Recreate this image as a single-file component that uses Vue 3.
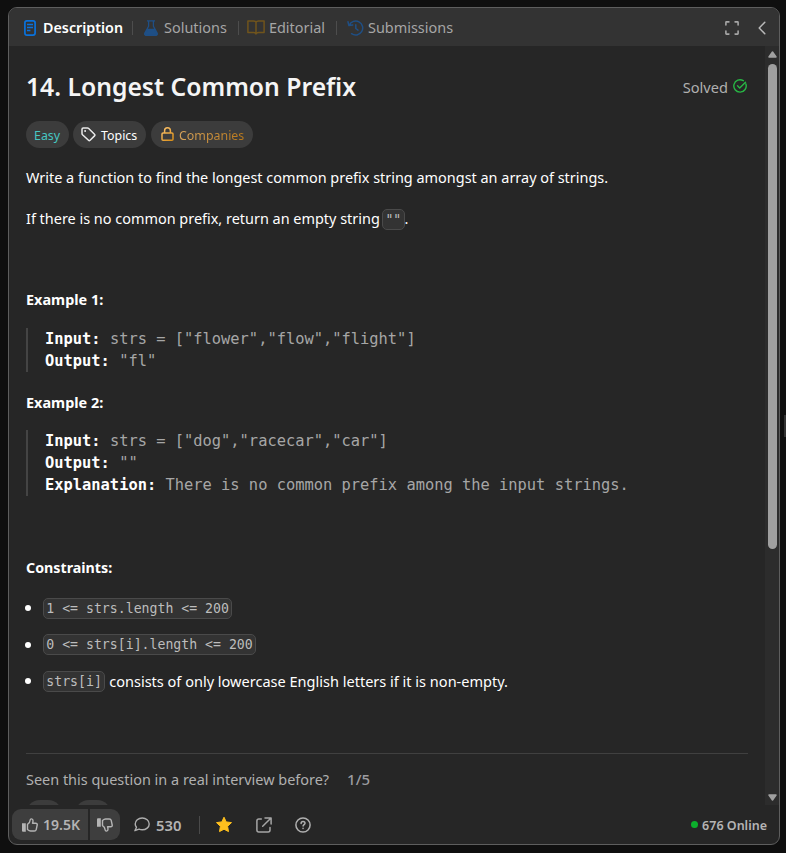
<script setup>
const examples = [
  {
    title: 'Example 1:',
    lines: [
      ['Input:', 'strs = ["flower","flow","flight"]'],
      ['Output:', '"fl"'],
    ],
  },
  {
    title: 'Example 2:',
    lines: [
      ['Input:', 'strs = ["dog","racecar","car"]'],
      ['Output:', '""'],
      ['Explanation:', 'There is no common prefix among the input strings.'],
    ],
  },
]
const constraints = [
  { code: '1 <= strs.length <= 200', text: '' },
  { code: '0 <= strs[i].length <= 200', text: '' },
  { code: 'strs[i]', text: 'consists of only lowercase English letters if it is non-empty.' },
]
</script>

<template>
  <div class="page">
    <section class="panel">
      <header class="tabs">
        <div class="tab active">
          <svg class="doc" width="12" height="16" viewBox="0 0 12 16" fill="none" stroke="#0a72dc" stroke-width="1.7">
            <rect x="0.9" y="0.9" width="10.2" height="14.2" rx="2" />
            <path d="M3 4.5h6M3 7.5h6M3 10.5h3.4" stroke-width="1.3" />
          </svg>
          <span>Description</span>
        </div>
        <i class="sep s1"></i>
        <div class="tab">
          <svg class="flask" width="14" height="16" viewBox="0 0 14 16" fill="none" stroke="#1f4f85" stroke-width="1.3" stroke-linejoin="round">
            <path d="M3 .8h8M4.600 .8v5.400L1 12.900c-.7 1.400 0 2.400 1.300 2.400h9.400c1.300 0 2-1 1.300-2.400L9.400 6.200V.8" />
            <path d="M3.400 9.400h7.200l2.200 4c.4 1-.1 1.600-1 1.600H2.200c-.9 0-1.400-.6-1-1.600z" fill="#1f4f85" />
          </svg>
          <span>Solutions</span>
        </div>
        <i class="sep s2"></i>
        <div class="tab">
          <svg class="book" width="18" height="15" viewBox="0 0 18 15" fill="none" stroke="#70541c" stroke-width="1.5" stroke-linejoin="round">
            <path d="M9 2.300C8.600 1.300 7.700.9 6.500.9H.9v11.500h5.600c1.300 0 2.100.5 2.500 1.500.4-1 1.200-1.500 2.500-1.500h5.600V.9h-5.600C10.300.9 9.400 1.300 9 2.300zM9 2.300v11.600" />
          </svg>
          <span>Editorial</span>
        </div>
        <i class="sep s3"></i>
        <div class="tab">
          <svg class="history" width="17" height="16" viewBox="0 0 17 16" fill="none" stroke="#1f4f85" stroke-width="1.500" stroke-linecap="round" stroke-linejoin="round">
            <path d="M2.300 5.200A7 7 0 1 1 4.600 13.700M1 1.800l.9 3.700 3.800-.6M8.800 4.800v3.700l2.200 1.600" />
          </svg>
          <span>Submissions</span>
        </div>
        <svg class="expand" width="14" height="14" viewBox="0 0 14 14" fill="none" stroke="#a6a6a6" stroke-width="1.600" stroke-linecap="round" stroke-linejoin="round">
          <path d="M.9 3.900V1.400a.5.5 0 0 1 .5-.5h2.500M10.100.9h2.500a.5.5 0 0 1 .5.5v2.500M13.100 10.100v2.500a.5.5 0 0 1-.5.500h-2.500M3.900 13.100H1.400a.5.5 0 0 1-.5-.5v-2.500" />
        </svg>
        <svg class="chevron" width="8" height="14" viewBox="0 0 8 14" fill="none" stroke="#b8b8b8" stroke-width="1.500" stroke-linecap="round" stroke-linejoin="round">
          <path d="M6.800 1.200 1.200 7l5.600 5.800" />
        </svg>
      </header>

      <div class="body">
        <main class="content">
          <div class="title-row">
            <h1>14. Longest Common Prefix</h1>
            <div class="solved">
              <span>Solved</span>
              <svg width="14" height="14" viewBox="0 0 14 14" fill="none" stroke="#28b645" stroke-width="1.400" stroke-linecap="round" stroke-linejoin="round">
                <path d="M12.900 5A6.200 6.200 0 1 1 10.300 1.700M4.500 6.700l2.200 2.200 5.800-5.700" />
              </svg>
            </div>
          </div>

          <div class="tags">
            <span class="tag easy">Easy</span>
            <span class="tag topics">
              <svg width="15" height="15" viewBox="0 0 15 15" fill="none" stroke="#e8e8e8" stroke-width="1.500" stroke-linejoin="round">
                <path d="M1 2.200Q1 1 2.200 1h4.300q.7 0 1.200.5l5.800 5.800q.8.8 0 1.600l-4.400 4.400q-.8.8-1.600 0L1.500 7.700Q1 7.200 1 6.500z" />
                <circle cx="4.100" cy="4.100" r="1" fill="#e8e8e8" stroke="none" />
              </svg>
              Topics
            </span>
            <span class="tag companies">
              <svg width="13" height="14" viewBox="0 0 13 14" fill="none" stroke="url(#gold)" stroke-width="1.500">
                <defs>
                  <linearGradient id="gold" gradientUnits="userSpaceOnUse" x1="0" y1="0" x2="13" y2="14">
                    <stop offset="0" stop-color="#ffc876" />
                    <stop offset="1" stop-color="#d58a12" />
                  </linearGradient>
                </defs>
                <rect x="1" y="6" width="11" height="7.200" rx="1" />
                <path d="M3.600 6V3.700a2.900 2.900 0 0 1 5.800 0V6" />
              </svg>
              <span class="gold">Companies</span>
            </span>
          </div>

          <article class="prose">
            <p>Write a function to find the longest common prefix string amongst an array of strings.</p>
            <p>If there is no common prefix, return an empty string <code>""</code>.</p>
            <p>&nbsp;</p>
            <template v-for="ex in examples" :key="ex.title">
              <p><strong>{{ ex.title }}</strong></p>
              <div class="sample">
                <div v-for="[label, value] in ex.lines" :key="label"><b>{{ label }}</b> {{ value }}</div>
              </div>
            </template>
            <p class="constraints"><strong>Constraints:</strong></p>
            <ul>
              <li v-for="c in constraints" :key="c.code"><code>{{ c.code }}</code> {{ c.text }}</li>
            </ul>
          </article>

          <div class="interview">
            <span>Seen this question in a real interview before?</span>
            <span class="count">1/5</span>
          </div>
          <div class="answers"><i></i><i></i></div>
        </main>
        <aside class="scrollbar">
          <svg width="9" height="7" viewBox="0 0 9 7"><path d="M4.500 1 8 6H1z" fill="#a0a0a0" stroke="#a0a0a0" stroke-width="1.500" stroke-linejoin="round" /></svg>
          <div class="thumb"></div>
          <svg class="down" width="9" height="7" viewBox="0 0 9 7"><path d="M4.500 6 8 1H1z" fill="#a0a0a0" stroke="#a0a0a0" stroke-width="1.500" stroke-linejoin="round" /></svg>
        </aside>
      </div>

      <footer class="footer">
        <button class="vote up">
          <svg width="16" height="14" viewBox="0 0 16 14" fill="none" stroke="#b4b4b4" stroke-width="1.400" stroke-linejoin="round">
            <path d="M0 5.200h3.800v8.600H1q-1 0-1-1z" fill="#b4b4b4" stroke="none" />
            <path d="M5.500 6.400C7.300 5.400 8 4 8.100 2.200 8.200.4 11 .2 11 2.700c0 1-.2 1.800-.5 2.500h3.100c1.200 0 1.800.8 1.600 1.800l-1 4.600c-.2.900-.9 1.400-1.900 1.400H8.600c-1.200 0-2-.5-3.100-1.500z" />
          </svg>
          <span>19.5K</span>
        </button>
        <button class="vote dn">
          <svg width="16" height="14" viewBox="0 0 16 14" fill="none" stroke="#b4b4b4" stroke-width="1.400" stroke-linejoin="round">
            <path d="M0 8.800h3.800V.2H1q-1 0-1 1z" fill="#b4b4b4" stroke="none" />
            <path d="M5.500 7.600C7.300 8.600 8 10 8.100 11.800c.1 1.800 2.900 2 2.900-.5 0-1-.2-1.800-.5-2.500h3.100c1.200 0 1.800-.8 1.600-1.800l-1-4.600C14 1.500 13.300 1 12.300 1H8.600c-1.200 0-2 .5-3.100 1.500z" />
          </svg>
        </button>
        <svg class="bubble" width="16" height="15" viewBox="0 0 16 15" fill="none" stroke="#adadad" stroke-width="1.400" stroke-linejoin="round">
          <path d="M8.200 1c3.900 0 7 2.500 7 5.900s-3.100 5.900-7 5.900c-1.100 0-2.200-.2-3.100-.6L.9 13.700l1.600-3.400C1.700 9.300 1.200 8.200 1.200 6.900 1.200 3.500 4.300 1 8.200 1z" />
        </svg>
        <span class="comments">530</span>
        <i class="bar"></i>
        <svg class="star" width="18" height="17" viewBox="0 0 18 17">
          <path d="M9 1.200l2.200 4.700 5.300.7-3.900 3.700.9 5.300L9 13.200l-4.500 2.400.9-5.300-3.900-3.700 5.300-.7z" fill="#ffc01e" stroke="#ffc01e" stroke-width="1" stroke-linejoin="round" />
        </svg>
        <svg class="share" width="16" height="16" viewBox="0 0 16 16" fill="none" stroke="#a5a5a5" stroke-width="1.500" stroke-linecap="round" stroke-linejoin="round">
          <path d="M5.300 2H2.800Q.9 2 .9 3.900v9.200q0 2 1.900 2h9.300q1.900 0 1.900-2v-2.600M9 .9h6.100V7M15 1 6.700 9.300" />
        </svg>
        <svg class="help" width="16" height="16" viewBox="0 0 16 16" fill="none" stroke="#b0b0b0" stroke-width="1.500" stroke-linecap="round" stroke-linejoin="round">
          <circle cx="8" cy="8" r="7.100" />
          <path d="M6.100 6.500c0-2.600 3.900-2.500 3.900-.3 0 1.400-1.900 1.400-1.900 2.900M8.050 11.300v.1" />
        </svg>
        <div class="online"><i></i><span>676 Online</span></div>
      </footer>
    </section>
    <i class="handle"></i>
  </div>
</template>

<style>
body { background: #0f0f0f; }
</style>

<style scoped>
* { box-sizing: border-box; }
.page {
  display: flex;
  align-items: flex-start;
  height: 853px;
  padding: 7px 0 0 8px;
  overflow: hidden;
  background: #0f0f0f;
  color: #fff;
  font: 14.45px/24px "Noto Sans", "Open Sans", sans-serif;
}
svg, i { display: block; flex: none; }
.panel {
  display: flex;
  flex-direction: column;
  flex: none;
  width: 772px;
  height: 838px;
  overflow: hidden;
  border: 1px solid #5e5e5e;
  border-radius: 9px;
  background: #262626;
}
.handle { width: 2px; height: 22px; margin: 408px 0 0 4px; background: #333; }

.tabs {
  display: flex;
  align-items: center;
  flex: none;
  height: 38px;
  padding: 1px 13px 0 15px;
  background: #333;
  color: #a6a6a6;
}
.tab { display: flex; align-items: center; white-space: nowrap; }
.tab span { line-height: 22px; }
.active { color: #fff; font-weight: 600; font-size: 14.3px; }
.doc { margin-right: 7px; }
.flask { margin-right: 6px; }
.history { margin-right: 4px; }
.book { margin-right: 4px; }
.sep { width: 1px; height: 14px; background: #4d4d4d; }
.s1 { margin: 0 11px 0 9px; }
.s2 { margin: 0 8px 0 11px; }
.s3 { margin: 0 10px 0 11px; }
.expand { margin-left: auto; margin-right: 19px; }

.body { display: flex; flex: none; height: 759px; overflow: hidden; }
.content { flex: 1; min-width: 0; padding: 23px 17px 0; }
.title-row { display: flex; justify-content: space-between; height: 36px; }
h1 { margin: 0; font-size: 24.700px; font-weight: 600; line-height: 36px; color: #f5f5f5; white-space: nowrap; }
.solved { display: flex; align-items: center; gap: 5px; height: 36px; margin-right: 1px; color: #b0b0b0; }
.solved span { font-size: 14.600px; }
.solved svg { margin-top: -2px; }
.tags { display: flex; gap: 4px; margin-top: 16px; }
.tag {
  display: flex;
  align-items: center;
  height: 27px;
  padding: 3px 9px 0 8px;
  border-radius: 14px;
  background: #3c3c3c;
  font-size: 12.4px;
}
.tag svg { margin-top: -4px; }
.easy { width: 43px; color: #46c6c2; }
.topics { width: 73px; gap: 5px; padding-left: 8px; }
.companies { width: 102px; gap: 5px; padding-left: 10px; margin-left: 1px; }
.gold { background: linear-gradient(90deg, #d9a55c, #b9781a); background-clip: text; -webkit-background-clip: text; color: transparent; }

.prose { margin-top: 17.400px; }
p { margin: 0 0 16.600px; height: 24px; padding-top: 1px; white-space: nowrap; }
strong { font-weight: 700; }
p code { margin-left: -1.500px; }
.sample {
  margin-bottom: 18px;
  padding-left: 17px;
  border-left: 2px solid #444;
  color: #a6a6a6;
  font: 15.400px/22px "DejaVu Sans Mono", monospace;
  white-space: pre;
}
.sample b { color: #fff; }
code {
  display: inline-block;
  height: 21px;
  padding: 0 2.300px;
  border: 1px solid #4a4a4a;
  border-radius: 5px;
  background: #333;
  color: #bdbdbd;
  font: 13.200px/19px "DejaVu Sans Mono", monospace;
}
.constraints { margin-top: 59.500px; padding-top: 0; font-size: 14.250px; }
ul { margin: 0; padding: 0; list-style: none; }
li { display: flex; align-items: center; gap: 4px; height: 24px; margin-bottom: 12.500px; font-size: 14.540px; white-space: nowrap; }
li::before { content: ""; width: 6px; height: 6px; margin: 0 8px 0 -1px; border-radius: 50%; background: #fff; }
.interview {
  display: flex;
  gap: 18px;
  margin-top: 60px;
  padding-top: 14px;
  border-top: 1px solid #404040;
  color: #b0b0b0;
  white-space: nowrap;
}
.count { margin-top: -1px; color: #9c9ca0; font-weight: 500; font-size: 15px; }
.answers { display: flex; gap: 13px; margin-top: 8px; }
.answers i { width: 36px; height: 28px; border-radius: 14px; background: #3c3c3c; }

.scrollbar { display: flex; flex-direction: column; flex: none; width: 14px; padding: 5px 2px 4px 3px; background: #2c2c2c; }
.thumb { width: 9px; height: 485px; margin-top: 6px; border-radius: 5px; background: #9f9f9f; }
.down { margin-top: auto; }

.footer { display: flex; align-items: center; flex: 1; padding: 0 12px 0 3px; color: #b4b4b4; font-weight: 600; }
button {
  display: flex;
  align-items: center;
  height: 31px;
  border: 0;
  background: #3e3e3e;
  color: #b4b4b4;
  font: 600 14px/22px "Noto Sans", sans-serif;
}
.up { width: 76px; padding: 1px 0 0 10px; gap: 5px; border-radius: 9px 0 0 9px; }
.dn { width: 30px; margin-left: 2px; padding: 0 0 0 7px; border-radius: 0 9px 9px 0; }
.bubble { margin: 0 6px 0 14px; }
.comments { width: 25px; font-size: 14.800px; }
.bar { width: 1px; height: 18px; margin: 0 15px 0 18px; background: #4a4a4a; }
.share { margin: 0 23px; }
.online { display: flex; align-items: center; gap: 4px; margin-left: auto; font-size: 12.500px; }
.online span { padding-top: 2px; }
.online i { width: 7px; height: 7px; border-radius: 50%; background: #0caf2c; }
</style>
